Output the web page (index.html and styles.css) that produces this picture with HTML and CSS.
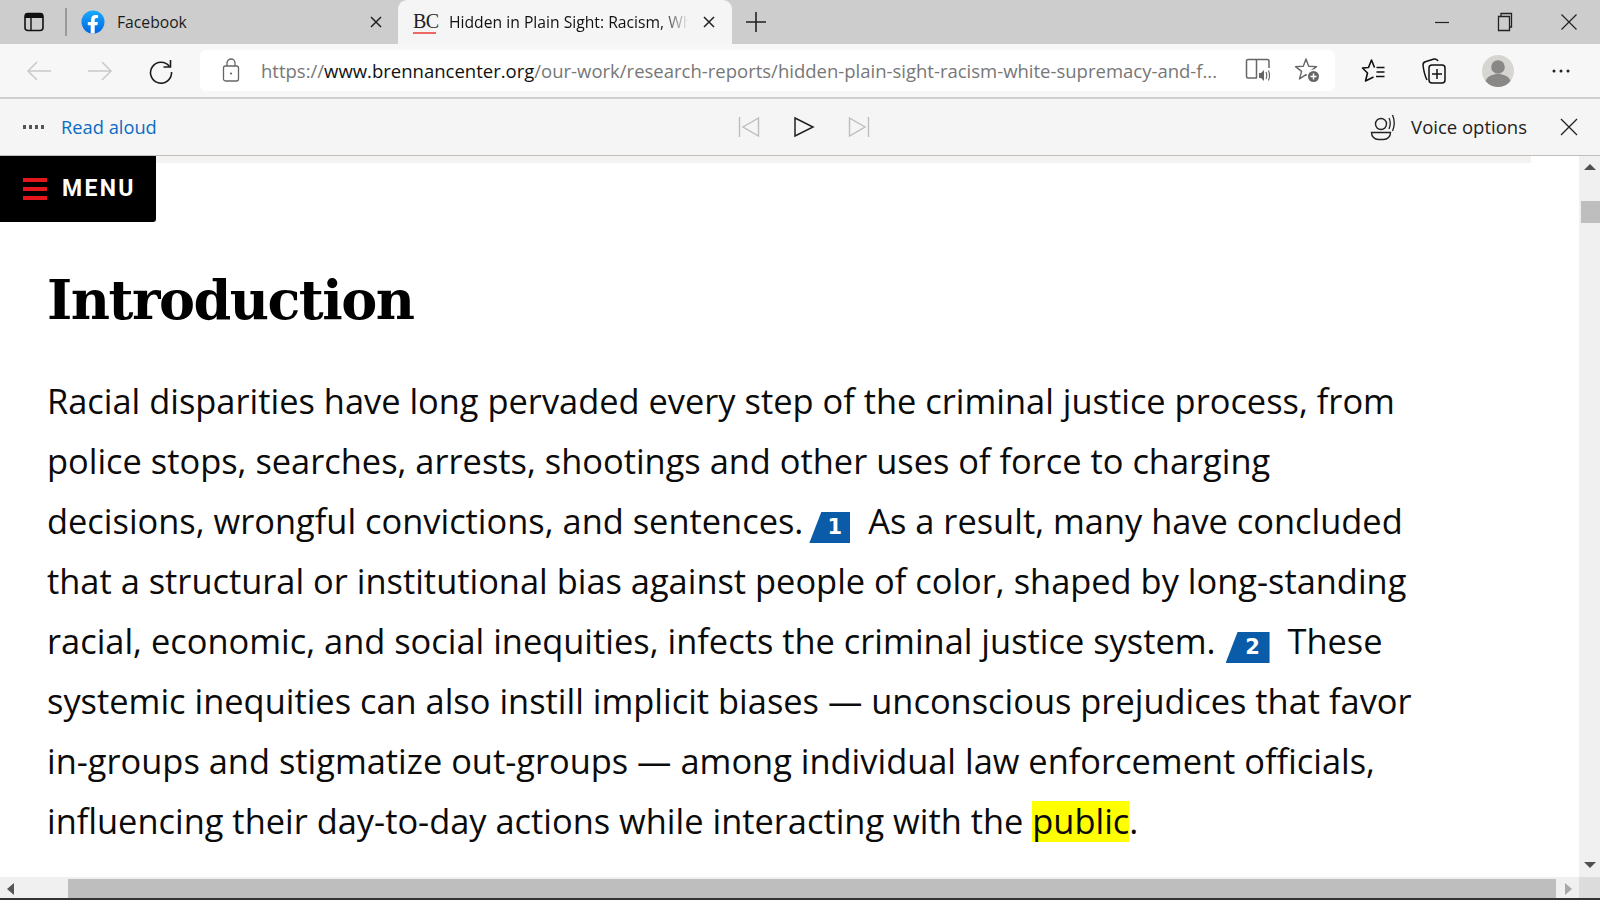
FILE: index.html
```html
<!DOCTYPE html>
<html lang="en">
<head>
<meta charset="utf-8">
<title>Hidden in Plain Sight</title>
<link rel="stylesheet" href="styles.css">
</head>
<body>
<div class="app">
  <header class="tabstrip">
    <div class="sidebtn">
      <svg width="22" height="22" viewBox="0 0 22 22"><rect x="2" y="2.5" width="18" height="17" rx="3" fill="none" stroke="#111" stroke-width="1.6"/><path d="M2 3.5q0-1 1-1h16q1 0 1 1V7H2z" fill="#111"/><path d="M8 7v12" stroke="#111" stroke-width="1.4"/></svg>
    </div>
    <div class="tabsep"></div>
    <div class="tab inactive">
      <svg class="fav" width="24" height="24" viewBox="0 0 24 24"><defs><linearGradient id="fb" x1="0" y1="0" x2="0" y2="1"><stop offset="0" stop-color="#18acfe"/><stop offset="1" stop-color="#0163e0"/></linearGradient></defs><circle cx="12" cy="12" r="11.5" fill="url(#fb)"/><path d="M16.4 15.3l.5-3.3h-3.2V9.9c0-.9.4-1.8 1.9-1.8h1.4V5.3s-1.3-.2-2.6-.2c-2.6 0-4.3 1.6-4.3 4.4V12H6.8v3.3h2.9v8.1a11.6 11.6 0 0 0 4 0v-8.1z" fill="#fff"/></svg>
      <span class="tabtitle">Facebook</span>
      <svg class="tabx" width="14" height="14" viewBox="0 0 14 14"><path d="M2 2l10 10M12 2L2 12" stroke="#222" stroke-width="1.5"/></svg>
    </div>
    <div class="tab active">
      <span class="bc">BC</span>
      <span class="tabtitle fade">Hidden in Plain Sight: Racism, Wh</span>
      <svg class="tabx" width="14" height="14" viewBox="0 0 14 14"><path d="M2 2l10 10M12 2L2 12" stroke="#222" stroke-width="1.5"/></svg>
    </div>
    <div class="newtab">
      <svg width="22" height="22" viewBox="0 0 22 22"><path d="M11 1v20M1 11h20" stroke="#222" stroke-width="1.6"/></svg>
    </div>
    <div class="winctl">
      <svg width="16" height="16" viewBox="0 0 16 16"><path d="M1 8.5h14" stroke="#222" stroke-width="1.2"/></svg>
      <svg width="16" height="22" viewBox="0 0 16 22"><path d="M1.500 5.500h11v14h-11zM4 5.500V2.500h10.500v13.500h-2" fill="none" stroke="#222" stroke-width="1.300"/></svg>
      <svg width="18" height="22" viewBox="0 0 18 22"><path d="M1.500 3.500l15 15M16.500 3.500l-15 15" stroke="#222" stroke-width="1.200"/></svg>
    </div>
  </header>

  <nav class="toolbar">
    <svg class="navicon" width="26" height="24" viewBox="0 0 26 24"><path d="M25 12H2M11 3l-9 9 9 9" fill="none" stroke="#c9c9c9" stroke-width="1.500"/></svg>
    <svg class="navicon" width="26" height="24" viewBox="0 0 26 24"><path d="M1 12h23M15 3l9 9-9 9" fill="none" stroke="#c9c9c9" stroke-width="1.500"/></svg>
    <svg class="navicon" width="26" height="26" viewBox="0 0 26 26"><path d="M21.500 8.500A10.500 10.500 0 1 0 23.500 14" fill="none" stroke="#1c1c1c" stroke-width="1.600"/><path d="M22.500 2v7h-7" fill="none" stroke="#1c1c1c" stroke-width="1.600"/></svg>
    <div class="address">
      <svg class="lock" width="18" height="24" viewBox="0 0 18 24"><rect x="1.500" y="8" width="15" height="15" rx="2" fill="none" stroke="#666" stroke-width="1.300"/><path d="M5 8V5a4 4 0 0 1 8 0v3" fill="none" stroke="#666" stroke-width="1.300"/><circle cx="9" cy="15.500" r="1.100" fill="#666"/></svg>
      <div class="url"><span class="dim">https://</span>www.brennancenter.org<span class="dim">/our-work/research-reports/hidden-plain-sight-racism-white-supremacy-and-f...</span></div>
      <svg class="addr-a" width="26" height="26" viewBox="0 0 26 26"><path d="M12 21H3q-1.500 0-1.500-1.500V4Q1.500 2.500 3 2.500h8.500V21M11.500 2.500h11q1.500 0 1.500 1.500v7" fill="none" stroke="#666" stroke-width="1.500"/><path d="M14 16h2l3-3v11l-3-3h-2z" fill="#666"/><path d="M21 15q1.500 3.500 0 7M23.500 13.500q2 5 0 10" fill="none" stroke="#666" stroke-width="1.100"/></svg>
      <svg class="addr-b" width="26" height="26" viewBox="0 0 26 26"><path d="M12 2L14.700 9.300 22.500 9.600 16.400 14.400 18.500 21.900 12 17.600 5.500 21.900 7.600 14.400 1.500 9.600 9.300 9.300z" fill="none" stroke="#666" stroke-width="1.400" stroke-linejoin="round"/><circle cx="19.500" cy="19.500" r="7" fill="#fff"/><circle cx="19.500" cy="19.500" r="5.500" fill="#666"/><path d="M19.500 16.500v6M16.500 19.500h6" stroke="#fff" stroke-width="1.500"/></svg>
    </div>
    <div class="tools">
      <svg class="t1" width="26" height="26" viewBox="0 0 26 26"><path d="M13.500 9.500L10.500 2 7.500 9.500 1.500 10 6.500 15 4.500 23 12.500 19" fill="none" stroke="#111" stroke-width="1.600" stroke-linejoin="round"/><path d="M15.500 9.500h8M15.500 14h8M15 18.500h8.500" stroke="#111" stroke-width="1.500"/></svg>
      <svg class="t2" width="26" height="28" viewBox="0 0 26 28"><path d="M6 23Q3 17 2 8 2 5 5 4.500L13 2q3-.5 4 2" fill="none" stroke="#111" stroke-width="1.500"/><rect x="8" y="8" width="16" height="18" rx="3" fill="none" stroke="#111" stroke-width="1.500"/><path d="M16 12v10M11 17h10" stroke="#111" stroke-width="1.500"/></svg>
      <svg class="avatar" width="32" height="32" viewBox="0 0 32 32"><circle cx="16" cy="16" r="16" fill="#d6d5d1"/><circle cx="16" cy="12" r="6.800" fill="#8a8886"/><path d="M3.500 26c2-5 7-7 12.500-7s10.500 2 12.500 7A16 16 0 0 1 3.500 26z" fill="#8a8886"/></svg>
      <svg class="more" width="18" height="6" viewBox="0 0 18 6"><circle cx="2" cy="3" r="1.500" fill="#222"/><circle cx="9" cy="3" r="1.500" fill="#222"/><circle cx="16" cy="3" r="1.500" fill="#222"/></svg>
    </div>
  </nav>

  <section class="readbar">
    <div class="rb-left">
      <svg width="22" height="6" viewBox="0 0 22 6"><path d="M1 1h3v4H1zM7 1h3v4H7zM13 1h3v4h-3zM19 1h3v4h-3z" fill="#555"/></svg>
      <span class="rb-title">Read aloud</span>
    </div>
    <div class="rb-mid">
      <svg width="22" height="22" viewBox="0 0 22 22"><path d="M1.500 1v20M20.500 2L5 11l15.500 9z" fill="none" stroke="#bdbdbd" stroke-width="1.400"/></svg>
      <svg width="22" height="22" viewBox="0 0 22 22"><path d="M2 2l18 9-18 9z" fill="none" stroke="#222" stroke-width="1.500"/></svg>
      <svg width="22" height="22" viewBox="0 0 22 22"><path d="M20.500 1v20M1.500 2L17 11 1.500 20z" fill="none" stroke="#bdbdbd" stroke-width="1.400"/></svg>
    </div>
    <div class="rb-right">
      <svg width="26" height="28" viewBox="0 0 26 28"><circle cx="11" cy="11" r="5.500" fill="none" stroke="#222" stroke-width="1.400"/><path d="M1.500 19.500h19c0 4-3 7-7 7h-5c-4 0-7-3-7-7z" fill="none" stroke="#222" stroke-width="1.400"/><path d="M19 5q2.500 5 0 11M22.500 2q3.500 8 0 16" fill="none" stroke="#222" stroke-width="1.300"/></svg>
      <span class="rb-voice">Voice options</span>
      <svg class="rb-x" width="18" height="18" viewBox="0 0 18 18"><path d="M1 1l16 16M17 1L1 17" stroke="#222" stroke-width="1.300"/></svg>
    </div>
  </section>

  <main class="viewport">
    <div class="page-col">
      <div class="page">
        <div class="band"></div>
        <article class="article">
          <h1 class="title">Introduction</h1>
          <p class="body">Racial disparities have long pervaded every step of the criminal justice process, from<br>police stops, searches, arrests, shootings and other uses of force to charging<br>decisions, wrongful convictions, and sentences. <span class="note n1">1</span> As a result, many have concluded<br>that a structural or institutional bias against people of color, shaped by long-standing<br>racial, economic, and social inequities, infects the criminal justice system. <span class="note n2">2</span> These<br>systemic inequities can also instill implicit biases — unconscious prejudices that favor<br>in-groups and stigmatize out-groups — among individual law enforcement officials,<br>influencing their day-to-day actions while interacting with the <mark class="hl">public</mark>.</p>
        </article>
        <div class="menu">
          <span class="burger"><i></i><i></i><i></i></span>
          <span class="menu-label">MENU</span>
        </div>
      </div>
      <div class="hscroll">
        <div class="h-btn"><span class="arr-l"></span></div>
        <div class="h-thumb"></div>
        <div class="h-btn r"><span class="arr-r"></span></div>
      </div>
    </div>
    <aside class="vscroll">
      <div class="v-up"><span class="arr-u"></span></div>
      <div class="v-thumb"></div>
      <div class="v-track"></div>
      <div class="v-down"><span class="arr-d"></span></div>
      <div class="corner"></div>
    </aside>
  </main>
  <div class="taskedge"></div>
</div>
</body>
</html>
```

FILE: styles.css
```css
* { box-sizing: border-box; }
html, body { margin: 0; height: 100%; overflow: hidden; }
body { font-family: "Open Sans", "Noto Sans", sans-serif; color: #1b1b1b; background: #fff; }
svg { display: block; flex: none; }

.app { width: 1600px; height: 900px; display: flex; flex-direction: column; }

/* tab strip */
.tabstrip { height: 44px; background: #cdcdcd; display: flex; align-items: stretch; }
.sidebtn { width: 65px; display: flex; align-items: center; padding-left: 23px; }
.tabsep { width: 2px; height: 28px; margin-top: 8px; background: #9a9a9a; }
.tab { display: flex; align-items: center; font-size: 15.700px; }
.tab.inactive { width: 331px; padding-left: 14px; }
.fav { width: 24px; height: 24px; }
.tab.inactive .tabtitle { margin-left: 12px; flex: 1; }
.tab.inactive .tabx { margin-right: 15px; }
.tab.active { width: 334px; background: #f5f5f5; border-radius: 9px 9px 0 0; padding-left: 15px; }
.bc { font-family: "Liberation Serif", serif; font-size: 20px; color: #222; border-bottom: 2px solid #e66; line-height: 20px; width: 23px; height: 23px; letter-spacing: -0.500px; }
.fade { width: 240px; margin-left: 13px; white-space: nowrap; overflow: hidden; color: #111;
  -webkit-mask-image: linear-gradient(to right, #000 88%, transparent 100%); mask-image: linear-gradient(to right, #000 88%, transparent 100%); }
.tab.active .tabx { margin-left: 13px; }
.newtab { width: 48px; display: flex; align-items: center; justify-content: center; }
.winctl { margin-left: auto; display: flex; align-items: center; gap: 47px; padding-right: 22px; }

/* toolbar */
.toolbar { height: 55px; background: #f7f7f7; border-bottom: 2px solid #cfcfcf; display: flex; align-items: center; padding-left: 26px; gap: 35px; }
.address { width: 1135px; height: 41px; margin-left: -9px; background: #fff; border-radius: 6px; display: flex; align-items: center; padding-left: 22px; margin-top: -1px; }
.lock { width: 18px; }
.url { margin-left: 21px; width: 960px; font-size: 18.500px; white-space: nowrap; overflow: hidden; color: #111; }
.dim { color: #777; }
.addr-a { margin-left: 24px; }
.addr-b { margin-left: 23px; }
.tools { display: flex; align-items: center; margin-left: -9px; }
.t1 { margin-right: 34px; }
.t2 { margin-right: 35px; }
.avatar { margin-right: 38px; }

/* read aloud */
.readbar { height: 57px; background: #f5f5f5; border-bottom: 1px solid #bfbdbb; display: grid; grid-template-columns: 1fr auto 1fr; align-items: center; padding: 0 22px; }
.rb-left { display: flex; align-items: center; gap: 17px; }
.rb-title { color: #0a6cc4; font-size: 18.300px; margin-top: -2px; }
.rb-mid { display: flex; gap: 33px; align-items: center; margin-left: 8px; }
.rb-right { display: flex; align-items: center; justify-content: flex-end; }
.rb-voice { margin-left: 15px; font-size: 18.500px; color: #222; margin-top: -2px; }
.rb-x { margin-left: 33px; }

/* page */
.viewport { flex: 1; display: flex; min-height: 0; }
.page-col { flex: 1; display: flex; flex-direction: column; min-width: 0; }
.page { flex: 1; position: relative; overflow: hidden; background: #fff; }
.band { width: 1531px; height: 7px; background: #f5f3f1; }
.article { padding: 101px 0 0 47px; }
.title { margin: 0; font-family: "DejaVu Serif", serif; font-weight: 700; font-size: 54px; line-height: 72px; letter-spacing: -1.500px; color: #000; }
.body { margin: 35px 0 0; font-family: "Open Sans", sans-serif; font-size: 34.400px; line-height: 60px; color: #0b0b0b; white-space: nowrap; }
.note { display: inline-block; width: 41px; height: 31px; padding-left: 10px; background: #0a5ca8; color: #fff; font-family: "DejaVu Sans", sans-serif; font-size: 21px; font-weight: 700; line-height: 31px; text-align: center; vertical-align: 0; clip-path: polygon(12px 0, 100% 0, 100% 100%, 0 100%); }
.note.n1 { margin: 0 9px 0 -3px; }
.note.n2 { width: 44px; margin: 0 9px 0 1px; }
.hl { background: linear-gradient(transparent 4px, #ffff00 4px, #ffff00 45px, transparent 45px); color: inherit; }
.menu { position: absolute; left: 0; top: 0; width: 156px; height: 66px; background: #000; border-radius: 0 0 3px 0; display: flex; align-items: center; padding-left: 23px; }
.burger { width: 24px; display: flex; flex-direction: column; gap: 5px; }
.burger i { display: block; height: 4px; background: #e3171c; }
.menu-label { margin-left: 15px; margin-top: -2px; font-family: Roboto, "Liberation Sans", sans-serif; font-weight: 700; font-size: 23px; letter-spacing: 2.300px; color: #fff; }

/* scrollbars */
.hscroll { height: 21px; background: #f0f0f0; display: flex; align-items: stretch; padding-top: 2px; }
.h-btn { width: 68px; display: flex; align-items: center; padding-left: 7px; }
.h-btn.r { width: 23px; padding-left: 9px; }
.h-thumb { flex: 1; background: #bebebe; }
.arr-l { width: 0; height: 0; border: 6px solid transparent; border-left: 0; border-right: 7px solid #555; }
.arr-r { width: 0; height: 0; border: 6px solid transparent; border-right: 0; border-left: 7px solid #a8a8a8; }
.vscroll { width: 21px; background: #f0f0f0; display: flex; flex-direction: column; }
.v-up { height: 45px; display: flex; justify-content: center; padding-top: 8px; }
.v-thumb { height: 22px; background: #bebebe; margin-left: 2px; }
.v-track { flex: 1; }
.v-down { height: 20px; display: flex; justify-content: center; padding-top: 5px; }
.arr-u { width: 0; height: 0; border: 6px solid transparent; border-top: 0; border-bottom: 6px solid #505050; }
.arr-d { width: 0; height: 0; border: 6px solid transparent; border-bottom: 0; border-top: 6px solid #505050; }
.corner { height: 21px; background: #dcdcdc; }
.taskedge { height: 2px; background: #333; }
```
